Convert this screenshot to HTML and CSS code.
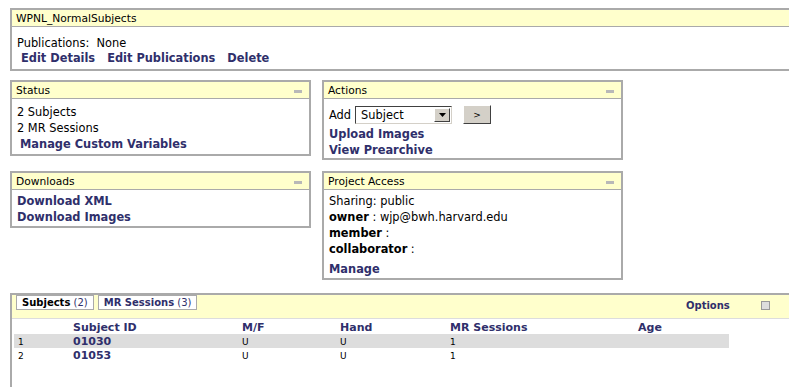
FILE: index.html
```html
<!DOCTYPE html>
<html>
<head>
<meta charset="utf-8">
<link rel="stylesheet" href="styles.css">
</head>
<body>
<div class="page">
  <div class="box top">
    <div class="hd">WPNL_NormalSubjects</div>
    <div class="top-bd">
      <div class="pubs">Publications:&nbsp; None</div>
      <div class="toplinks"><a>Edit Details</a><a>Edit Publications</a><a>Delete</a></div>
    </div>
  </div>

  <div class="grid">
    <div class="box">
      <div class="hd">Status<span class="min"></span></div>
      <div class="bd bd-status">
        <div class="ln">2 Subjects</div>
        <div class="ln">2 MR Sessions</div>
        <div class="ln"><a class="ind">Manage Custom Variables</a></div>
      </div>
    </div>
    <div class="box">
      <div class="hd">Actions<span class="min"></span></div>
      <div class="bd bd-actions">
        <div class="addrow">Add
          <span class="sel"><span class="selv">Subject</span><span class="arr"><svg width="7" height="4" viewBox="0 0 7 4"><path d="M0 0h7L3.5 4z" fill="#000"/></svg></span></span>
          <span class="btn">&gt;</span>
        </div>
        <div class="ln"><a>Upload Images</a></div>
        <div class="ln"><a>View Prearchive</a></div>
      </div>
    </div>
    <div class="box">
      <div class="hd">Downloads<span class="min"></span></div>
      <div class="bd bd-dl">
        <div class="ln"><a>Download XML</a></div>
        <div class="ln"><a>Download Images</a></div>
      </div>
    </div>
    <div class="box">
      <div class="hd">Project Access<span class="min"></span></div>
      <div class="bd bd-dl">
        <div class="ln">Sharing: public</div>
        <div class="ln"><b>owner</b> : wjp@bwh.harvard.edu</div>
        <div class="ln"><b>member</b> :</div>
        <div class="ln"><b>collaborator</b> :</div>
        <div class="ln manage"><a>Manage</a></div>
      </div>
    </div>
  </div>

  <div class="box bottom">
    <div class="tabhd">
      <div class="tabs">
        <span class="tab active"><b>Subjects</b> (2)</span>
        <span class="tab"><b>MR Sessions</b> (3)</span>
      </div>
      <div class="opts"><b>Options</b><span class="optbox"></span></div>
    </div>
    <table class="tbl">
      <thead>
        <tr><th class="c0"></th><th class="c1">Subject ID</th><th class="c2">M/F</th><th class="c3">Hand</th><th class="c4">MR Sessions</th><th class="c5">Age</th></tr>
      </thead>
      <tbody>
        <tr class="odd"><td>1</td><td class="id">01030</td><td>U</td><td>U</td><td>1</td><td></td></tr>
        <tr><td>2</td><td class="id">01053</td><td>U</td><td>U</td><td>1</td><td></td></tr>
      </tbody>
    </table>
  </div>
</div>
</body>
</html>
```
FILE: styles.css
```css
html, body {
  margin: 0;
  padding: 0;
  background: #fff;
  overflow: hidden;
}
body {
  font-family: "DejaVu Sans", Verdana, sans-serif;
  font-size: 11.4px;
  color: #000;
}
.page {
  padding: 8px 0 0 10px;
  width: 800px;
}
a {
  color: #2f2f6b;
  font-weight: bold;
}
.box {
  border: 2px solid #aaa;
  background: #fff;
  box-sizing: border-box;
}
.hd {
  background: #ffffcc;
  border-bottom: 1px solid #aaa;
  height: 16px;
  line-height: 17px;
  padding-left: 4px;
  position: relative;
  font-size: 10.7px;
}
.min {
  position: absolute;
  right: 7px;
  top: 8px;
  width: 8px;
  height: 3px;
  background: #b8b8b8;
}
.top {
  width: 790px;
}
.top-bd {
  padding: 9px 0 3px 5px;
}
.pubs {
  height: 14px;
  line-height: 15px;
}
.toplinks {
  line-height: 17px;
  height: 16px;
  padding-left: 4px;
}
.toplinks a {
  margin-right: 12px;
}
.grid {
  display: grid;
  grid-template-columns: 301px 301px;
  column-gap: 11px;
  row-gap: 11px;
  align-items: start;
  margin-top: 9px;
}
.bd {
  padding: 4px 5px 1px 5px;
}
.bd-status {
  padding-top: 5px;
  padding-bottom: 2px;
}
.bd-actions {
  padding-top: 4px;
  padding-bottom: 0;
}
.bd-dl {
  padding-top: 3px;
  padding-bottom: 1px;
}
.ln {
  line-height: 17px;
  height: 16px;
}
.ind {
  padding-left: 3px;
}
.addrow {
  display: flex;
  align-items: center;
  height: 23px;
}
.sel {
  display: inline-flex;
  align-items: center;
  margin-left: 4px;
  width: 97px;
  height: 18px;
  box-sizing: border-box;
  border-top: 1px solid #404040;
  border-left: 1px solid #404040;
  border-right: 1px solid #d4d0c8;
  border-bottom: 1px solid #d4d0c8;
  background: #fff;
  padding: 1px;
}
.selv {
  flex: 1;
  padding-left: 4px;
  font-size: 11.4px;
}
.arr {
  width: 16px;
  height: 14px;
  box-sizing: border-box;
  background: #d4d0c8;
  border-top: 1px solid #fff;
  border-left: 1px solid #fff;
  border-right: 1px solid #404040;
  border-bottom: 1px solid #404040;
  display: flex;
  align-items: center;
  justify-content: center;
}
.btn {
  margin-left: 11px;
  width: 28px;
  height: 19px;
  box-sizing: border-box;
  background: #d4d0c8;
  border-top: 1px solid #fff;
  border-left: 1px solid #fff;
  border-right: 1px solid #404040;
  border-bottom: 1px solid #404040;
  display: inline-flex;
  align-items: center;
  justify-content: center;
  font-size: 9px;
}
.manage {
  margin-top: 4px;
}
.bottom {
  width: 790px;
  margin-top: 13px;
  height: 110px;
}
.tabhd {
  background: #ffffcc;
  border-bottom: 1px solid #ddd;
  height: 23px;
  position: relative;
}
.tabs {
  display: flex;
  gap: 4px;
  padding: 0 0 0 4px;
  font-size: 10px;
}
.tab {
  border: 1px solid #aaa;
  background: #fff;
  height: 13px;
  line-height: 14px;
  padding: 0 5px;
  color: #2f2f6b;
}
.tab b {
  color: #2f2f6b;
}
.tab.active b {
  color: #000;
}
.opts {
  position: absolute;
  left: 674px;
  top: 5px;
  display: flex;
  align-items: center;
}
.opts b {
  color: #2f2f6b;
  font-size: 10px;
}
.optbox {
  margin-left: 31px;
  width: 9px;
  height: 9px;
  box-sizing: border-box;
  border: 1px solid #999;
  background: #ddd;
}
.tbl {
  margin: 1px 0 0 2px;
  border-collapse: collapse;
  width: 715px;
}
.tbl th {
  text-align: left;
  color: #2f2f6b;
  font-size: 11px;
  padding: 1px 0 0 4px;
  height: 13px;
}
.tbl td {
  font-size: 9px;
  padding: 1px 0 0 4px;
  height: 13px;
}
.tbl tr.odd td {
  background: #dddddd;
}
.tbl td.id {
  font-weight: bold;
  color: #2f2f6b;
  font-size: 11px;
}
.c0 { width: 51px; }
.c1 { width: 165px; }
.c2 { width: 94px; }
.c3 { width: 106px; }
.c4 { width: 184px; }
```
